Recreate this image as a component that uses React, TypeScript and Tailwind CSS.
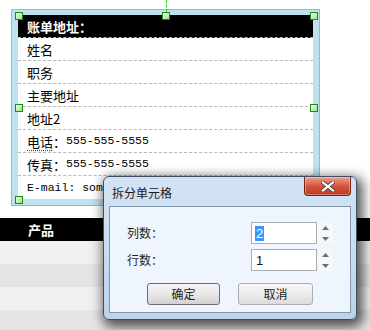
const fields = [
  { label: '姓名' },
  { label: '职务' },
  { label: '主要地址' },
  { label: '地址2' },
  { label: '电话：', value: '555-555-5555', squiggle: true },
  { label: '传真：', value: '555-555-5555' },
  { mono: 'E-mail: someone@example.com' },
];

const handles = [
  'left-[3px] top-[2px]',
  'left-[150px] top-[2px]',
  'left-[298px] top-[2px]',
  'left-[3px] top-[94px]',
  'left-[298px] top-[94px]',
  'left-[3px] top-[186px]',
  'left-[150px] top-[186px]',
  'left-[298px] top-[186px]',
];

function Spinner({ value, selected }: { value: string; selected?: boolean }) {
  return (
    <div className="flex h-[22px]">
      <div className="flex w-[66px] items-center border border-[#a9adb4] bg-white pl-[3px] font-['Liberation_Sans',sans-serif] text-[13px] leading-none">
        <span className={selected ? 'bg-[#3399ff] px-[1px] py-[1px] text-white' : 'px-[1px] text-[#111]'}>{value}</span>
      </div>
      <div className="flex w-[16px] flex-col bg-[#f6f7f8]">
        <div className="flex flex-1 items-center justify-center">
          <svg width="7" height="4" viewBox="0 0 7 4">
            <path d="M0 4 L3.5 0 L7 4 Z" fill="#6f6f6f" />
          </svg>
        </div>
        <div className="flex flex-1 items-center justify-center">
          <svg width="7" height="4" viewBox="0 0 7 4">
            <path d="M0 0 L7 0 L3.5 4 Z" fill="#6f6f6f" />
          </svg>
        </div>
      </div>
    </div>
  );
}

export default function App() {
  return (
    <div className="relative h-[330px] w-[370px] overflow-hidden bg-white font-['Noto_Sans_CJK_SC',sans-serif]">
      <div className="pl-[11px] pt-[9px]">
        <div className="relative w-[309px] border border-[#8fbccb] bg-[#bde3ef] px-[6px] pb-[6px] pt-[5px]">
          <div className="bg-white">
            <div className="flex h-[23px] items-center border-b border-dashed border-[#b8b8b8] bg-black pl-[9px] text-[13px] font-bold leading-none text-white">
              账单地址：
            </div>
            {fields.map((f, i) => (
              <div
                key={i}
                className={`flex h-[23px] items-center whitespace-nowrap pl-[9px] text-[13px] leading-none text-black ${
                  i < fields.length - 1 ? 'border-b border-dashed border-[#b8b8b8]' : ''
                }`}
              >
                {f.mono ? (
                  // the rest of the address sits behind the dialog
                  <span className="w-[76px] overflow-hidden font-['Liberation_Mono',monospace] text-[11.5px]">{f.mono}</span>
                ) : (
                  <>
                    {f.squiggle ? (
                      <span>
                        <span className="underline decoration-[#e01010] decoration-dotted underline-offset-[3px]">电话</span>：
                      </span>
                    ) : (
                      <span>{f.label}</span>
                    )}
                    {f.value && <span className="font-['Liberation_Mono',monospace] text-[11.5px]">{f.value}</span>}
                  </>
                )}
              </div>
            ))}
          </div>

          {/* rotate guide */}
          <div className="absolute left-[154px] top-[-10px] h-[12px] border-l border-dashed border-[#22cc22]" />
          {/* selection handles */}
          {handles.map((h) => (
            <div
              key={h}
              className={`absolute ${h} h-[8px] w-[8px] border border-[#178f17] bg-gradient-to-br from-[#effdea] to-[#9adf8c]`}
            />
          ))}
        </div>
      </div>

      <div className="mt-[12px]">
        <div className="flex h-[23px] items-center bg-black pl-[28px] text-[13px] font-bold leading-none text-white">产品</div>
        <div className="h-[23px] bg-[#f0f0f0]" />
        <div className="h-[23px] bg-[#e4e4e4]" />
        <div className="h-[23px] bg-[#f0f0f0]" />
        <div className="h-[23px] bg-[#e4e4e4]" />
      </div>

      {/* split cells dialog */}
      <div className="absolute left-[103px] top-[176px] flex h-[144px] w-[254px] flex-col rounded-[6px] border border-[#3f4e60] bg-gradient-to-b from-[#d3e3f4] via-[#c9dcf0] to-[#bcd3ea] shadow-[3px_4px_12px_3px_rgba(0,0,0,0.65)]">
        <div className="relative flex h-[29px] items-center pl-[8px] pt-[3px] text-[12px] leading-none text-[#1b1b1b]">
          拆分单元格
          <div className="absolute right-[5px] top-0 flex h-[19px] w-[47px] items-center justify-center rounded-b-[4px] border border-t-0 border-[#6e2518] bg-gradient-to-b from-[#eba190] via-[#d4553c] to-[#c2361d] shadow-[inset_0_0_0_1px_rgba(255,255,255,0.35)]">
            <svg width="14" height="11" viewBox="0 0 14 11">
              <path d="M2 1.5 L12 9.5 M12 1.5 L2 9.5" stroke="#4a4a4a" strokeWidth="4" strokeLinecap="square" />
              <path d="M2 1.5 L12 9.5 M12 1.5 L2 9.5" stroke="#ffffff" strokeWidth="2.2" strokeLinecap="square" />
            </svg>
          </div>
        </div>
        <div className="mx-[5px] mb-[6px] flex-1 border border-[#8496ac] bg-[#eff5fc] pt-[15px] text-[12px] leading-none text-[#1e1e1e]">
          <div className="flex h-[22px] items-center">
            <div className="w-[141px] pl-[17px]">列数：</div>
            <Spinner value="2" selected />
          </div>
          <div className="mt-[5px] flex h-[22px] items-center">
            <div className="w-[141px] pl-[17px]">行数：</div>
            <Spinner value="1" />
          </div>
          <div className="mt-[12px] flex gap-[18px] pl-[37px]">
            <button className="h-[22px] w-[73px] rounded-[3px] border border-[#6f6f6f] bg-gradient-to-b from-[#f4f4f4] via-[#e8e8e8] to-[#d2d2d2] text-[12px] leading-none text-[#1e1e1e]">
              确定
            </button>
            <button className="h-[22px] w-[75px] rounded-[3px] border border-[#aeaeae] bg-gradient-to-b from-[#f6f6f6] via-[#ececec] to-[#dcdcdc] text-[12px] leading-none text-[#1e1e1e]">
              取消
            </button>
          </div>
        </div>
      </div>
    </div>
  );
}
